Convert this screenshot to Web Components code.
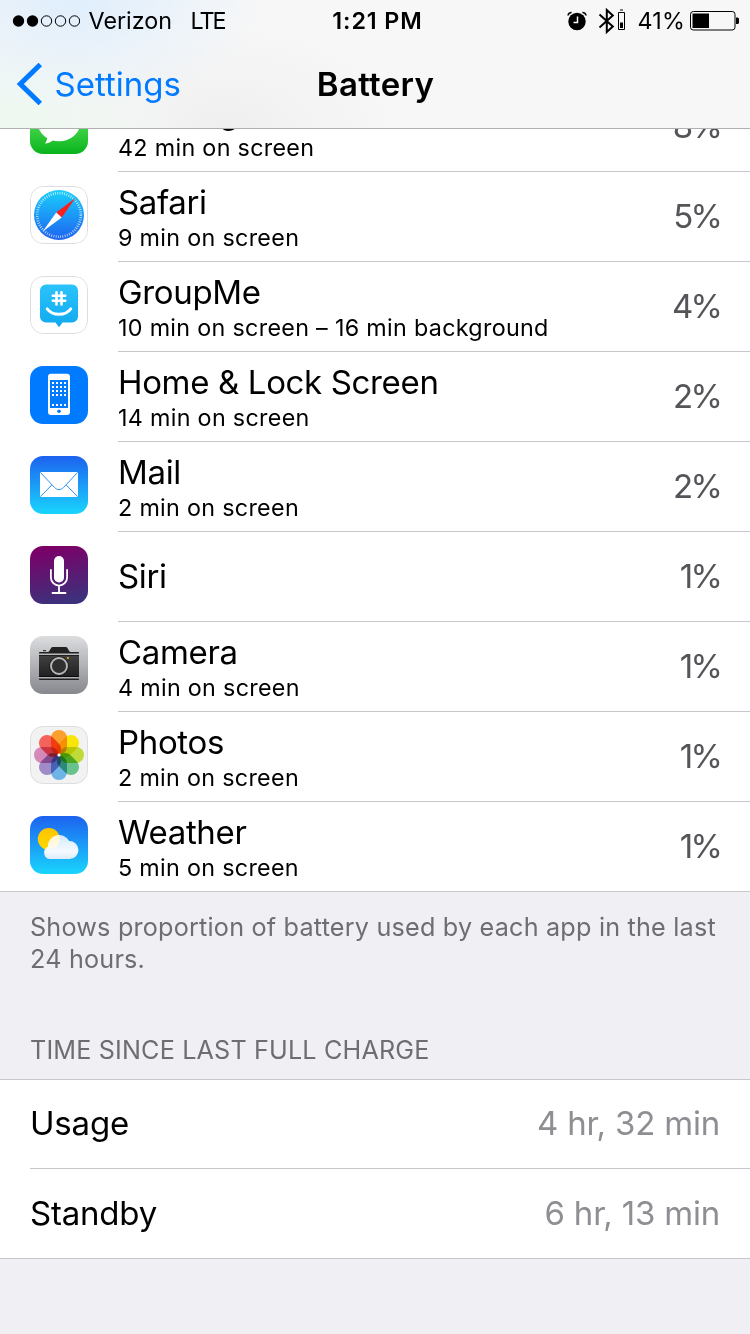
<!DOCTYPE html>
<html lang="en">
<head>
<meta charset="utf-8">
<title>Battery</title>
<style>
	body {
		margin: 0;
		background: #efeff4;
		font-family: Inter, "Liberation Sans", sans-serif;
		color: #000;
	}
</style>
</head>
<body>
<battery-screen></battery-screen>

<script>
	(() => {
		const define = (name, template) => {
			customElements.define(name, class extends HTMLElement {
				constructor() {
					super();
					this.attachShadow({ mode: 'open' }).innerHTML = template;
				}
			});
		};

		// artwork on a 58x58 grid, clipped to the rounded tile
		const icons = {
			messages: `
				<linearGradient id="g" x2="0" y2="1"><stop stop-color="#84f97c"/><stop offset="1" stop-color="#08b31c"/></linearGradient>
				<rect width="58" height="58" fill="url(#g)"/>
				<ellipse cx="29" cy="27.500" rx="21" ry="17.800" fill="#fff"/>
				<path d="M17 40c.5 3-.3 5.500-2.200 7.500 3.500 0 6.200-1.500 8.200-3.500z" fill="#fff"/>`,
			safari: `
				<linearGradient id="g" x2="0" y2="1"><stop stop-color="#1bcffc"/><stop offset="1" stop-color="#1d63f0"/></linearGradient>
				<rect width="58" height="58" fill="#fff"/>
				<circle cx="29" cy="29" r="25" fill="url(#g)"/>
				<circle cx="29" cy="29" r="21.800" fill="none" stroke="#fff" stroke-opacity=".75" stroke-width="2.600" stroke-dasharray=".8 1.483"/>
				<path d="M45.200 12.300 26.200 26.600l5.500 5z" fill="#ff1d17"/>
				<path d="M12.700 45.500 26.200 26.600l5.500 5z" fill="#fff"/>`,
			groupme: `
				<linearGradient id="g" x2="0" y2="1"><stop stop-color="#2cc3fb"/><stop offset="1" stop-color="#0fa9ef"/></linearGradient>
				<rect width="58" height="58" fill="#fff"/>
				<path d="M16 8.500h26a6 6 0 0 1 6 6v26a6 6 0 0 1-6 6h-9.500L29 51.300l-3.500-4.800H16a6 6 0 0 1-6-6v-26a6 6 0 0 1 6-6z" fill="url(#g)"/>
				<path d="M26.500 16.200v12.200M31.500 16.200v12.200M22.800 19.800h12.400M22.800 24.800h12.400" stroke="#fff" stroke-width="2.600" stroke-linecap="round"/>
				<path d="M17.200 32.800c5.500 7.300 18.100 7.300 23.600 0" fill="none" stroke="#fff" stroke-width="2.900" stroke-linecap="round"/>`,
			home: `
				<rect width="58" height="58" fill="#007aff"/>
				<rect x="18" y="7.800" width="22" height="41.200" rx="3" fill="#fff"/>
				<rect x="20" y="14" width="18" height="28" fill="#007aff"/>
				<path d="M22 17h15M22 21h15M22 25h15M22 29h15M22 39h15" stroke="#fff" stroke-width="2" stroke-dasharray="2 2"/>
				<circle cx="29" cy="45.200" r="1.800" fill="#007aff"/>`,
			mail: `
				<linearGradient id="g" x2="0" y2="1"><stop stop-color="#1d62f0"/><stop offset="1" stop-color="#19d5fd"/></linearGradient>
				<rect width="58" height="58" fill="url(#g)"/>
				<rect x="10" y="16" width="38" height="25" rx="1.200" fill="#fff"/>
				<path d="M10.500 16.500 24.500 31.500c2.800 2.800 6.200 2.800 9 0L47.500 16.500M10.500 40.500 21.800 29M47.500 40.500 36.200 29" fill="none" stroke="#2b93f2" stroke-width="1"/>`,
			siri: `
				<linearGradient id="g" x1=".4" x2=".6" y2="1"><stop stop-color="#7c0068"/><stop offset="1" stop-color="#3b327c"/></linearGradient>
				<rect width="58" height="58" fill="url(#g)"/>
				<rect x="24" y="10" width="10" height="26.500" rx="5" fill="#fff"/>
				<path d="M20.900 24v7.500a8.100 8.100 0 0 0 16.200 0V24M29 40v7M22.500 47h13" fill="none" stroke="#fff" stroke-width="1.800" stroke-linecap="round"/>`,
			camera: `
				<linearGradient id="g" x2="0" y2="1"><stop stop-color="#dcdddf"/><stop offset="1" stop-color="#86888e"/></linearGradient>
				<linearGradient id="b" x2="0" y2="1"><stop stop-color="#414141"/><stop offset="1" stop-color="#202020"/></linearGradient>
				<rect width="58" height="58" fill="url(#g)"/>
				<path d="M9 17c0-.7.300-1 1-1h7c1.500 0 2-.5 2.600-1.500l1.200-2c.5-1 1.200-1.500 2.200-1.500h12.500c1 0 1.700.5 2.200 1.500l1.200 2c.6 1 1.100 1.500 2.600 1.500H48c.7 0 1 .3 1 1v.8H9z" fill="#222"/>
				<rect x="13" y="14.200" width="3" height="1" fill="#111"/>
				<rect x="9" y="19.300" width="40" height="21.500" fill="url(#b)"/>
				<path d="M9 19.200h40M9 40.700h40" stroke="#000" stroke-width="1"/>
				<path d="M9 18.200h40M9 41.900h40" stroke="#e4e5e6" stroke-width=".8"/>
				<path d="M9 42.400h40v.6c0 .7-.3 1-1 1H10c-.7 0-1-.3-1-1z" fill="#222"/>
				<circle cx="29" cy="30" r="9.800" fill="#1c1c1c"/>
				<circle cx="29" cy="30" r="8" fill="#303030" stroke="#b6b8bb" stroke-width="1.900"/>
				<rect x="36.900" y="21" width="2" height="2" rx=".4" fill="#dba21a"/>`,
			photos: `
				<rect width="58" height="58" fill="#f2f2f2"/>
				<g style="isolation: isolate">
					${['#fba02f', '#f8e60b', '#bfdb3a', '#67c28c', '#6fb4e6', '#a08bc8', '#d489b8', '#f4625c'].map((fill, i) =>
						`<rect x="21" y="4" width="16" height="24.500" rx="7.900" fill="${fill}" transform="rotate(${i * 45} 29 29)" style="mix-blend-mode: multiply"/>`).join('')}
				</g>
				<circle cx="29" cy="29" r="1.600" fill="#fff"/>`,
			weather: `
				<linearGradient id="g" x2="0" y2="1"><stop stop-color="#1d62f0"/><stop offset="1" stop-color="#19d5fd"/></linearGradient>
				<linearGradient id="s" x2="0" y2="1"><stop stop-color="#ffc400"/><stop offset="1" stop-color="#ffd800"/></linearGradient>
				<linearGradient id="c" x2="0" y2="1"><stop stop-color="#fff" stop-opacity=".8"/><stop offset=".35" stop-color="#fff" stop-opacity=".88"/><stop offset=".7" stop-color="#f4f9ff"/><stop offset="1" stop-color="#dcebfb"/></linearGradient>
				<rect width="58" height="58" fill="url(#g)"/>
				<circle cx="18.800" cy="23" r="11" fill="url(#s)"/>
				<path d="M19.500 43a6.500 6.500 0 0 1-1.600-12.300A11.300 11.300 0 0 1 39.200 25 9 9 0 1 1 39.700 43z" fill="url(#c)"/>`
		};

		customElements.define('app-icon', class extends HTMLElement {
			constructor() {
				super();
				this.attachShadow({ mode: 'open' });
			}

			connectedCallback() {
				this.shadowRoot.innerHTML = `
					<style>
						:host {
							display: block;
							flex: none;
							width: 58px;
							height: 58px;
							border-radius: 13px;
							overflow: hidden;
						}
						svg { display: block; }
					</style>
					<svg width="58" height="58" viewBox="0 0 58 58">
						${icons[this.getAttribute('name')]}
						${this.hasAttribute('outlined') ? '<rect x=".5" y=".5" width="57" height="57" rx="12.500" fill="none" stroke="#dedee0"/>' : ''}
					</svg>
				`;
			}
		});

		define('status-bar', `
			<style>
				:host {
					display: grid;
					grid-template-columns: 1fr auto 1fr;
					height: 40px;
					padding: 0 11px 0 12px;
					font-size: 23.300px;
					line-height: 41px;
				}
				div { display: flex; align-items: center; }
				svg { display: block; flex: none; }
				.carrier { gap: 8.500px; }
				.network { margin-left: 10px; letter-spacing: -2px; }
				.time { padding-left: 4px; font-weight: 600; letter-spacing: .9px; }
				.right { justify-content: flex-end; }
				.level { margin: 0 5px 0 11px; letter-spacing: .2px; }
				.bluetooth { margin-left: 11px; }
			</style>
			<div class="carrier">
				<svg width="68" height="12" viewBox="0 0 68 12">
					<circle cx="6.500" cy="6" r="5.700"/>
					<circle cx="20.500" cy="6" r="5.700"/>
					<g fill="none" stroke="#000">
						<circle cx="34.500" cy="6" r="5.200"/>
						<circle cx="48.500" cy="6" r="5.200"/>
						<circle cx="62.500" cy="6" r="5.200"/>
					</g>
				</svg>
				<span>Verizon</span>
				<span class="network">LTE</span>
			</div>
			<div class="time">1:21 PM</div>
			<div class="right">
				<svg width="20" height="20" viewBox="0 0 20 20">
					<circle cx="10" cy="10.500" r="8.700"/>
					<path d="M1 4.500C1.300 2.500 2.500 1.500 4.600 1.500M19 4.500C18.700 2.500 17.500 1.500 15.400 1.500" fill="none" stroke="#000" stroke-width="1.500"/>
					<path d="M10.500 5.500v6H6.500" fill="none" stroke="#f7f7f7" stroke-width="1.500"/>
				</svg>
				<svg class="bluetooth" width="28" height="28" viewBox="0 0 28 28">
					<path d="M1.500 7.500 14.800 19.500 8.800 25V3L14.800 8.500 1.500 20.500" fill="none" stroke="#000" stroke-width="2"/>
					<path d="M20.500 5.500h6v17h-6z" fill="none" stroke="#000"/>
					<path d="M22 3h3" stroke="#000"/>
					<path d="M22 15.500h3v5.500h-3z"/>
				</svg>
				<span class="level">41%</span>
				<svg width="49" height="20" viewBox="0 0 49 20">
					<rect x=".5" y=".5" width="44.500" height="18.500" rx="2.800" fill="none" stroke="#000"/>
					<path d="M2.500 2.500h16.500v14.500H2.500zM46 6.500h1.500q1.500 0 1.500 1.500v3.500q0 1.500-1.500 1.500H46z"/>
				</svg>
			</div>
		`);

		define('nav-bar', `
			<style>
				:host {
					display: block;
					height: 128px;
					border-bottom: 1px solid #b0b0b2;
					background:
						radial-gradient(ellipse 190px 110px at 75px 0, #dfeefc, transparent),
						radial-gradient(ellipse 180px 100px at 0 128px, #edf8f0, transparent),
						radial-gradient(ellipse 170px 100px at 225px 128px, #efefef, transparent),
						#f7f7f7;
				}
				.row {
					display: grid;
					grid-template-columns: 1fr auto 1fr;
					height: 88px;
					padding: 0 16px;
					font-size: 33px;
					line-height: 88px;
				}
				.back {
					display: flex;
					align-items: center;
					gap: 11.500px;
					color: #007aff;
				}
				.title { padding-left: 1px; font-weight: 600; letter-spacing: .3px; }
			</style>
			<status-bar></status-bar>
			<div class="row">
				<div class="back">
					<svg width="27" height="42" viewBox="0 0 27 42">
						<path d="M24.300 1.500 4.300 21l20 19.500" fill="none" stroke="#007aff" stroke-width="5"/>
					</svg>
					<slot name="back"></slot>
				</div>
				<div class="title"><slot></slot></div>
			</div>
		`);

		define('app-row', `
			<style>
				:host {
					display: flex;
					gap: 30px;
					height: 90px;
					padding-left: 30px;
					background: #fff;
				}
				::slotted(app-icon) { margin-top: 14px; }
				.body {
					flex: 1;
					display: flex;
					align-items: flex-start;
					justify-content: space-between;
					padding-right: 30px;
					border-bottom: 1px solid #c8c7cc;
				}
				:host([last]) .body { border: 0; }
				.text { padding-top: 10px; }
				:host([single]) .text { padding-top: 24px; }
				.name, .percent { font-size: 33px; line-height: 40px; }
				.name { letter-spacing: -.35px; }
				.detail {
					font-size: 23.300px;
					line-height: 32px;
					letter-spacing: .31px;
				}
				.percent {
					padding-top: 24px;
					letter-spacing: -2.800px;
					color: #555559;
				}
			</style>
			<slot name="icon"></slot>
			<div class="body">
				<div class="text">
					<div class="name"><slot></slot></div>
					<div class="detail"><slot name="detail"></slot></div>
				</div>
				<div class="percent"><slot name="percent"></slot></div>
			</div>
		`);

		define('value-row', `
			<style>
				:host {
					display: block;
					padding-left: 30px;
					background: #fff;
					font-size: 33px;
					line-height: 86px;
					letter-spacing: -.2px;
				}
				div {
					display: flex;
					justify-content: space-between;
					height: 88px;
					padding-right: 30px;
					border-bottom: 1px solid #c8c7cc;
				}
				:host([last]) { line-height: 89px; }
				:host([last]) div { height: 89px; border: 0; }
				.value { color: #8e8e93; }
			</style>
			<div>
				<span><slot></slot></span>
				<span class="value"><slot name="value"></slot></span>
			</div>
		`);

		const apps = [
			['messages', 'Messages', '42 min on screen', '8%'],
			['safari', 'Safari', '9 min on screen', '5%'],
			['groupme', 'GroupMe', '10 min on screen – 16 min background', '4%'],
			['home', 'Home &amp; Lock Screen', '14 min on screen', '2%'],
			['mail', 'Mail', '2 min on screen', '2%'],
			['siri', 'Siri', '', '1%'],
			['camera', 'Camera', '4 min on screen', '1%'],
			['photos', 'Photos', '2 min on screen', '1%'],
			['weather', 'Weather', '5 min on screen', '1%']
		];
		const outlined = ['safari', 'groupme', 'photos'];

		define('battery-screen', `
			<style>
				:host {
					display: flex;
					flex-direction: column;
					width: 750px;
					height: 1334px;
					overflow: hidden;
				}
				nav-bar { z-index: 1; flex: none; }
				/* scrolled so that the first row is partly under the bar */
				.apps {
					flex: none;
					margin-top: -47px;
					border-bottom: 1px solid #c8c7cc;
				}
				app-row[last] { height: 89px; }
				.note, .heading {
					padding: 0 30px;
					color: #6d6d72;
					font-size: 25.200px;
					line-height: 32px;
				}
				.note { margin-top: 19px; letter-spacing: .2px; }
				.heading { margin: 59px 0 13px; letter-spacing: .15px; }
				.times {
					border: solid #c8c7cc;
					border-width: 1px 0;
				}
			</style>
			<nav-bar><span slot="back">Settings</span>Battery</nav-bar>
			<div class="apps">
				${apps.map(([icon, name, detail, percent], i) => `
					<app-row ${i === apps.length - 1 ? 'last' : ''} ${detail ? '' : 'single'}>
						<app-icon slot="icon" name="${icon}" ${outlined.includes(icon) ? 'outlined' : ''}></app-icon>
						${name}
						${detail ? `<span slot="detail">${detail}</span>` : ''}
						<span slot="percent">${percent}</span>
					</app-row>`).join('')}
			</div>
			<div class="note">Shows proportion of battery used by each app in the last<br>24 hours.</div>
			<div class="heading">TIME SINCE LAST FULL CHARGE</div>
			<div class="times">
				<value-row>Usage<span slot="value">4 hr, 32 min</span></value-row>
				<value-row last>Standby<span slot="value">6 hr, 13 min</span></value-row>
			</div>
		`);
	})()
</script>
</body>
</html>
